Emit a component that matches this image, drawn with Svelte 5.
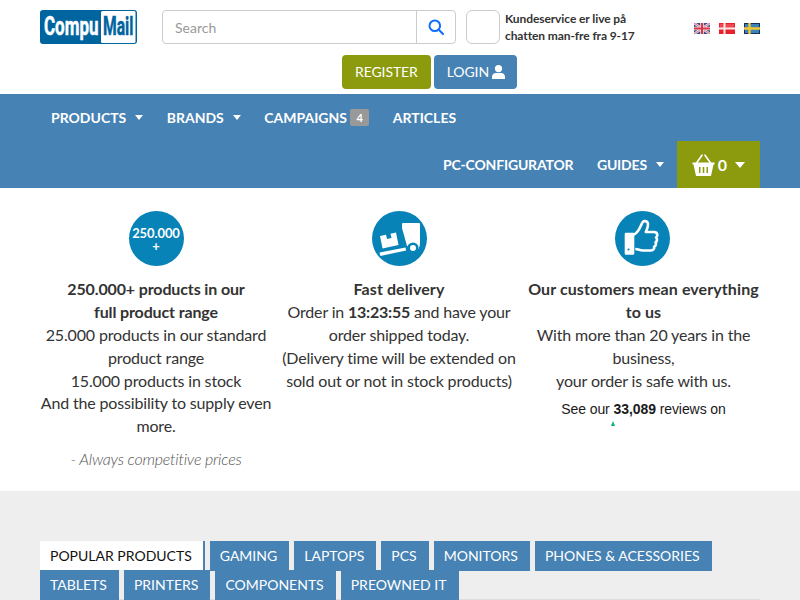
<script>
  const row1 = [
    { label: 'PRODUCTS', caret: true },
    { label: 'BRANDS', caret: true },
    { label: 'CAMPAIGNS', badge: '4' },
    { label: 'ARTICLES' }
  ];
  const tabs1 = ['GAMING', 'LAPTOPS', 'PCS', 'MONITORS', 'PHONES & ACESSORIES'];
  const tabs2 = ['TABLETS', 'PRINTERS', 'COMPONENTS', 'PREOWNED IT'];
</script>

<div class="page">
  <header class="wrap">
    <div class="top">
      <svg class="logo" width="97" height="34" viewBox="0 0 97 34" role="img" aria-label="CompuMail">
        <rect width="97" height="34" rx="3" fill="#00649f" />
        <rect x="61" y="1" width="34.500" height="32" rx="1.500" fill="#fff" />
        <text transform="translate(4 25) scale(0.68 1)" class="logo-text" fill="#fff" stroke="#fff" stroke-width="0.500">Compu</text>
        <text transform="translate(63 25) scale(0.625 1)" class="logo-text" fill="#00649f" stroke="#00649f" stroke-width="0.500">Mail</text>
      </svg>
      <div class="search">
        <div class="search-input">Search</div>
        <button class="search-btn" aria-label="Search">
          <svg width="16" height="16" viewBox="0 0 16 16" fill="none" stroke="#0d6efd" stroke-width="2">
            <circle cx="6.800" cy="6.800" r="5.300" />
            <path d="M10.800 10.800 15 15" stroke-linecap="round" />
          </svg>
        </button>
      </div>
      <div class="chat-box"></div>
      <div class="chat-text">Kundeservice er live på<br />chatten man-fre fra 9-17</div>
      <div class="flags">
        <svg width="16" height="11" viewBox="0 0 16 11">
          <rect width="16" height="11" fill="#3b4a8c" />
          <path d="M0 0 16 11M16 0 0 11" stroke="#e8dfe6" stroke-width="2.400" />
          <path d="M0 0 16 11M16 0 0 11" stroke="#d9505f" stroke-width="0.800" />
          <path d="M8 0V11M0 5.500H16" stroke="#f0e6ea" stroke-width="3.600" />
          <path d="M8 0V11M0 5.500H16" stroke="#dc3345" stroke-width="2" />
        </svg>
        <svg width="16" height="11" viewBox="0 0 16 11">
          <rect width="16" height="11" fill="#e8202c" />
          <rect x="1" y="1" width="14" height="4" fill="#f0474f" />
          <path d="M5.500 0V11M0 5.500H16" stroke="#fbeaea" stroke-width="2" />
        </svg>
        <svg width="16" height="11" viewBox="0 0 16 11">
          <rect width="16" height="11" fill="#13305c" />
          <rect x="1" y="1" width="14" height="9" fill="#3a82b8" />
          <path d="M5.500 0V11M0 5.500H16" stroke="#f1c62f" stroke-width="2.400" />
        </svg>
      </div>
    </div>
    <div class="auth">
      <button class="btn olive">REGISTER</button>
      <button class="btn blue">LOGIN
        <svg width="13" height="14" viewBox="0 0 13 14" fill="#fff">
          <circle cx="6.500" cy="3.600" r="3.600" />
          <path d="M0 14v-2.200C0 9.400 1.800 8 4 8h5c2.200 0 4 1.400 4 3.800V14z" />
        </svg>
      </button>
    </div>
  </header>

  <nav class="nav">
    <div class="wrap nav-inner">
      <div class="nav-row left">
        {#each row1 as item}
          <a class="nav-item" href="#top">{item.label}
            {#if item.caret}<span class="caret"></span>{/if}
            {#if item.badge}<span class="badge">{item.badge}</span>{/if}
          </a>
        {/each}
      </div>
      <div class="nav-row right">
        <a class="nav-item" href="#top">PC-CONFIGURATOR</a>
        <a class="nav-item" href="#top">GUIDES <span class="caret"></span></a>
        <a class="cart" href="#top">
          <svg width="23" height="22" viewBox="0 0 23 22" fill="#fff">
            <path d="M4.500 9 10 1.200M18.500 9 13 1.200" stroke="#fff" stroke-width="1.600" fill="none" stroke-linecap="round" />
            <path fill-rule="evenodd" d="M0.500 8.500h22v2h-1L19 22H4L1.500 10.500h-1zM7 13v6h1.500v-6zM10.700 13v6h1.600v-6zM14.500 13v6H16v-6z" />
          </svg>
          <span>0</span>
          <span class="caret"></span>
        </a>
      </div>
    </div>
  </nav>

  <section class="usp">
    <div class="col">
      <div class="round round-text">250.000<br />+</div>
      <p><strong class="tight">250.000+ products in our<br />full product range</strong><br />
      25.000 products in our standard product range<br />
      15.000 products in stock<br />
      And the possibility to supply even more.</p>
      <p class="note">- Always competitive prices</p>
    </div>
    <div class="col">
      <div class="round">
        <svg width="55" height="55" viewBox="0 0 55 55" fill="#fff">
          <path d="M30 13q0-1 1-1h16q1 0 1 1v19q0 3-1.500 6L35 35 30 17z" />
          <circle cx="41" cy="37" r="5.600" fill="#0783b8" />
          <circle cx="41" cy="37" r="3" />
          <path d="M7.500 41.500 33.500 36.500 34.200 39.500 8.300 45z" />
          <path fill-rule="evenodd" d="M8 25 14 23.700 15 28 19.500 27 18.500 22.700 24 21.500 26.500 34 10.500 37.500z" />
        </svg>
      </div>
      <p><strong>Fast delivery</strong><br />
      Order in <strong class="time">13:23:55</strong> and have your<br />
      order shipped today.<br />
      (Delivery time will be extended on sold out or not in stock products)</p>
    </div>
    <div class="col third">
      <div class="round">
        <svg width="55" height="55" viewBox="0 0 55 55" fill="none" stroke="#fff" stroke-width="2.600" stroke-linejoin="round">
          <path d="M11 23h7v19.500h-7z" fill="#fff" />
          <path d="M18 24c3.500-1.500 6-5 7.500-8.500.8-1.800 1.500-3.500 2.300-4.500 1-1.200 3.700-1.200 4.700.3 1 1.700.3 5.200-1.700 9.700h8c2 0 3.500 1.200 3.500 3 0 1.200-.6 2-1.300 2.500.8.600 1.100 1.500 1 2.500-.1 1.200-.8 2-1.500 2.400.5.700.6 1.600.3 2.500-.3 1-1 1.600-1.800 1.900.3.800.2 1.700-.3 2.400-.6 1-1.600 1.300-2.900 1.300h-8c-3 0-4.500-1.500-7.500-1.500" />
          <circle cx="13.500" cy="38.500" r="1.100" fill="#0783b8" stroke="none" />
        </svg>
      </div>
      <p><strong>Our customers mean everything to us</strong><br />
      With more than 20 years in the business,<br />
      your order is safe with us.</p>
      <p class="reviews">See our <b>33,089</b> reviews on</p>
      <div class="tp-mark"></div>
    </div>
  </section>

  <section class="grey">
    <div class="wrap tabs">
      <div class="tab-row">
        <a class="tab active" href="#top">POPULAR PRODUCTS</a>
        {#each tabs1 as t}<a class="tab" href="#top">{t}</a>{/each}
      </div>
      <div class="tab-row">
        {#each tabs2 as t}<a class="tab" href="#top">{t}</a>{/each}
      </div>
    </div>
  </section>
</div>

<style>
  :global(body) { margin: 0; }
  .page {
    width: 800px;
    height: 600px;
    overflow: hidden;
    font-family: Lato, "Liberation Sans", sans-serif;
    font-size: 16px;
    color: #333;
    background: #fff;
  }
  .wrap { width: 720px; margin: 0 auto; }
  .top { display: flex; align-items: center; padding-top: 10px; height: 34px; }
  .logo { flex: none; }
  .logo-text { font-family: Roboto, sans-serif; font-weight: 700; font-size: 25px; }
  .search { display: flex; width: 294px; height: 34px; margin-left: 25px; box-sizing: border-box; border: 1px solid #ccc; border-radius: 4px; }
  .search-input { flex: 1; padding-left: 12px; font-size: 14px; line-height: 34px; color: #999; }
  .search-btn { width: 39px; padding: 0; border: 0; border-left: 1px solid #ccc; background: none; display: flex; align-items: center; justify-content: center; }
  .chat-box { width: 34px; height: 34px; margin-left: 10px; box-sizing: border-box; border: 1px solid #ccc; border-radius: 6px; }
  .chat-text { margin: -1px 0 0 5px; font-size: 12px; font-weight: 700; line-height: 17px; width: 189px; letter-spacing: -0.090px; }
  .flags { display: flex; gap: 9px; margin-top: 3px; }
  .auth { display: flex; gap: 3px; margin: 11px 0 0 302px; }
  .btn { height: 34px; padding: 0 13px 1px; border: 0; border-radius: 4px; color: #fff; font: 400 14px Lato, sans-serif; letter-spacing: -0.100px; display: flex; align-items: center; gap: 3px; }
  .olive { background: #8c9a0d; }
  .blue { background: #4682b4; padding-right: 12px; }
  .nav { margin-top: 5px; height: 94px; background: #4682b4; }
  .nav-row { display: flex; height: 47px; align-items: center; }
  .nav-row.left { margin-left: -0.750px; }
  .nav-row.left .nav-item { letter-spacing: 0; }
  .nav-row.right { justify-content: flex-end; }
  .nav-item { display: flex; align-items: center; gap: 9px; padding: 0 11.750px; color: #fff; font-size: 14px; font-weight: 700; letter-spacing: -0.170px; text-decoration: none; }
  .caret { width: 0; height: 0; border-left: 4.500px solid transparent; border-right: 4.500px solid transparent; border-top: 5px solid #fff; }
  .badge { background: #999; color: #fff; font-size: 11px; line-height: 17px; padding: 0 6.500px; border-radius: 2px; margin-left: -6px; }
  .cart { height: 47px; display: flex; align-items: center; gap: 3px; padding: 0 15px 0 15px; margin-left: 1px; background: #8c9a0d; color: #fff; font-size: 16px; font-weight: 700; text-decoration: none; }
  .cart .caret { margin-left: 5px; border-left-width: 5.500px; border-right-width: 5.500px; border-top-width: 6px; }
  .usp { display: flex; width: 729px; height: 280px; margin: 0 auto; padding-top: 23px; transform: translateX(-1px); }
  .col { width: 243px; padding: 0 3px; box-sizing: border-box; text-align: center; display: flex; flex-direction: column; align-items: center; }
  .round { width: 55px; height: 55px; border-radius: 50%; background: #0783b8; flex: none; display: flex; align-items: center; justify-content: center; box-sizing: border-box; }
  .round-text { padding-top: 2px; color: #fff; font-size: 13px; font-weight: 700; line-height: 13px; letter-spacing: -0.100px; text-align: center; }
  .col p { margin: 12.200px 0 0; line-height: 1.42857; letter-spacing: -0.160px; }
  .third p { padding-left: 3px; }
  .col strong { font-weight: 700; letter-spacing: 0.090px; }
  .col strong.tight { letter-spacing: -0.130px; }
  .col strong.time { letter-spacing: -0.250px; }
  .col p.note { margin-top: 10.300px; font-style: italic; color: #555; font-weight: 300; letter-spacing: -0.220px; }
  .col p.reviews { margin-top: 6.800px; font: 14px/20px "Liberation Sans", Arial, sans-serif; letter-spacing: -0.080px; color: #1a1a1a; }
  .tp-mark { width: 0; height: 0; margin-top: 2px; margin-right: 58px; border-left: 2px solid transparent; border-right: 2px solid transparent; border-bottom: 5px solid #00b67a; }
  .grey { height: 109px; background: #eee; box-sizing: border-box; padding-top: 50px; }
  .tabs { border-bottom: 2px solid #ddd; height: 58px; }
  .tab-row { display: flex; gap: 5px; }
  .tab-row + .tab-row { margin-top: -1px; }
  .tab { display: block; height: 30px; padding: 0 10px; border-right: 2px solid #4682b4; line-height: 30px; font-size: 14px; background: #4682b4; color: #fff; text-decoration: none; }
  .tab.active { background: #fff; color: #111; height: 29px; line-height: 29px; padding-right: 11px; }
</style>
